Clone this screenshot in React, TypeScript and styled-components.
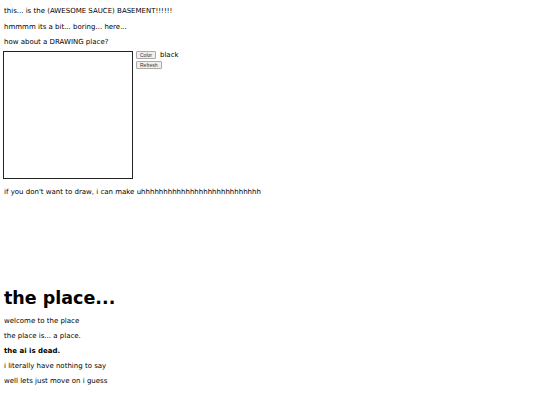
import React, { useRef, useState } from 'react';
import styled, { createGlobalStyle } from 'styled-components';

const GlobalStyle = createGlobalStyle`
  html, body {
    margin: 0;
    padding: 0;
    background: #fff;
  }
  body {
    font-family: "DejaVu Sans", Verdana, sans-serif;
    color: #000;
  }
`;

function App() {
  const canvasRef = useRef<HTMLCanvasElement>(null);
  const [color, setColor] = useState('black');

  const onRefresh = () => {
    const ctx = canvasRef.current?.getContext('2d');
    if (ctx) ctx.clearRect(0, 0, 128, 126);
  };

  return (
    <Page>
      <GlobalStyle />
      <Line>this... is the (AWESOME SAUCE) BASEMENT!!!!!!</Line>
      <Line>hmmmm its a bit... boring... here...</Line>
      <Line>how about a DRAWING place?</Line>
      <DrawRow>
        <Canvas ref={canvasRef} width={128} height={126} />
        <Controls>
          <ControlRow>
            <SmallButton onClick={() => setColor(color === 'black' ? 'red' : 'black')}>Color</SmallButton>
            <ColorName>{color}</ColorName>
          </ControlRow>
          <ControlRow>
            <SmallButton onClick={onRefresh}>Refresh</SmallButton>
          </ControlRow>
        </Controls>
      </DrawRow>
      <Line>if you don't want to draw, i can make uhhhhhhhhhhhhhhhhhhhhhhhhhhh</Line>
      <Spacer />
      <Heading>the place...</Heading>
      <Line>welcome to the place</Line>
      <Line>the place is... a place.</Line>
      <Line $bold>the ai is dead.</Line>
      <Line>i literally have nothing to say</Line>
      <Line>well lets just move on i guess</Line>
    </Page>
  );
}

const Page = styled.div`
  padding: 4px 4px;
`;

const Line = styled.p<{ $bold?: boolean }>`
  margin: 0;
  height: 15.5px;
  line-height: 15.5px;
  font-size: 7px;
  font-weight: ${(p) => (p.$bold ? 'bold' : 'normal')};
  white-space: nowrap;

  h1 ~ & {
    height: 15px;
    line-height: 15px;
  }
`;

const DrawRow = styled.div`
  display: flex;
  align-items: flex-start;
  gap: 3px;
  margin: 0.5px 0 5.5px -1px;
`;

const Canvas = styled.canvas`
  display: block;
  border: 1px solid #222;
  background: #fff;
`;

const Controls = styled.div`
  display: flex;
  flex-direction: column;
  gap: 2px;
`;

const ControlRow = styled.div`
  display: flex;
  align-items: center;
  gap: 4px;
`;

const SmallButton = styled.button`
  font-family: "Liberation Sans", Arial, sans-serif;
  font-size: 5px;
  line-height: 6px;
  padding: 0 3px;
  color: #333;
  background: #efefef;
  border: 1px solid #aaa;
  border-radius: 1px;
`;

const ColorName = styled.span`
  font-size: 7px;
`;

const Spacer = styled.div`
  height: 86px;
`;

const Heading = styled.h1`
  margin: 0 0 4px;
  font-size: 17.5px;
  line-height: 24px;
  font-weight: bold;
`;

export default App;
